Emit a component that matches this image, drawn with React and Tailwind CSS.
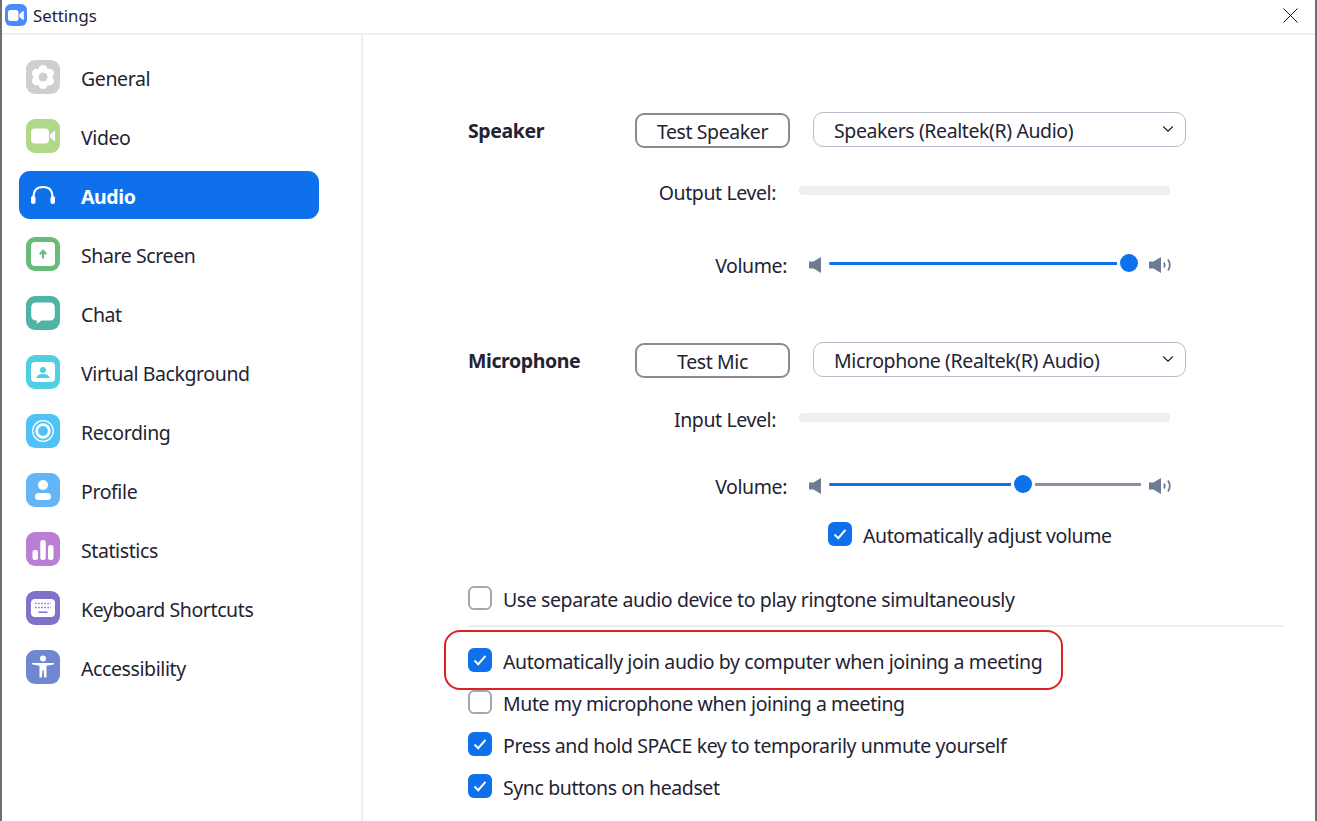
import { ChevronDown } from "lucide-react";

// sidebar tile icons, all drawn on a 34x34 box
const icons = {
  General: (
    <>
      <g fill="#fff">
        <circle cx="17" cy="17" r="8.500" />
        <circle cx="17" cy="9.500" r="4.500" />
        <circle cx="17" cy="24.500" r="4.500" />
        <circle cx="10.500" cy="13.250" r="4.500" />
        <circle cx="23.500" cy="13.250" r="4.500" />
        <circle cx="10.500" cy="20.750" r="4.500" />
        <circle cx="23.500" cy="20.750" r="4.500" />
      </g>
      <circle cx="17" cy="17" r="4.500" fill="#cfcfcf" />
    </>
  ),
  Video: (
    <>
      <rect x="5" y="9.500" width="18" height="15" rx="4" fill="#fff" />
      <path fill="#fff" d="M24 15.500l4-3.300c.6-.5 1.200-.2 1.200.6v8.400c0 .8-.6 1.100-1.200.6l-4-3.300z" />
    </>
  ),
  "Share Screen": (
    <>
      <rect x="5" y="5" width="24" height="24" rx="4" fill="#fff" />
      <path d="M17 21.500v-7M13.800 17.200l3.200-3.400 3.200 3.400" fill="none" stroke="#68bb78" strokeWidth="2" />
    </>
  ),
  Chat: (
    <path
      fill="#fff"
      d="M10 6.500h14c2.800 0 4.800 2 4.800 4.800v8.400c0 2.800-2 4.800-4.800 4.800H15.500l-5 3.500.6-3.500H10c-2.800 0-4.800-2-4.800-4.800v-8.400c0-2.800 2-4.800 4.800-4.800z"
    />
  ),
  "Virtual Background": (
    <>
      <rect x="5" y="7" width="24" height="20" rx="4" fill="#fff" />
      <circle cx="17" cy="15" r="3" fill="#4fcfe0" />
      <path d="M10.500 23c.4-2.800 3-4 6.500-4s6.100 1.200 6.500 4z" fill="#4fcfe0" />
    </>
  ),
  Recording: (
    <>
      <circle cx="17" cy="17" r="10.300" fill="none" stroke="#fff" strokeWidth="1.200" />
      <circle cx="17" cy="17" r="6.300" fill="none" stroke="#fff" strokeWidth="2.800" />
    </>
  ),
  Profile: (
    <>
      <circle cx="17" cy="12" r="5" fill="#fff" />
      <rect x="9" y="20" width="16" height="7" rx="3.500" fill="#fff" />
    </>
  ),
  Statistics: (
    <>
      <rect x="6.500" y="18" width="5.500" height="10" rx="2" fill="#fff" />
      <rect x="14.250" y="8" width="5.500" height="20" rx="2.500" fill="#fff" />
      <rect x="22" y="13" width="5.500" height="15" rx="2.500" fill="#fff" />
    </>
  ),
  "Keyboard Shortcuts": (
    <>
      <rect x="5" y="8" width="24" height="18" rx="4" fill="#fff" />
      <path
        d="M9 12.500h16M9 16.500h16"
        stroke="#7e72c9"
        strokeWidth="1.500"
        strokeDasharray="1.500 1.600"
        fill="none"
      />
      <rect x="12.500" y="20.500" width="9" height="1.500" fill="#7e72c9" />
    </>
  ),
  Accessibility: (
    <>
      <circle cx="17" cy="8.500" r="3" fill="#fff" />
      <path
        fill="#fff"
        d="M6.500 13h21c.7 0 .7 1.500 0 1.500L20.500 15.800V27.500h-2.300L17.500 20h-1l-.7 7.500h-2.300V15.800L6.500 14.500c-.7 0-.7-1.500 0-1.500z"
      />
    </>
  ),
};

const nav = [
  { name: "General", bg: "bg-[#cfcfcf]" },
  { name: "Video", bg: "bg-[#b0d889]" },
  { name: "Audio", active: true },
  { name: "Share Screen", bg: "bg-[#68bb78]" },
  { name: "Chat", bg: "bg-[#4fb3a5]" },
  { name: "Virtual Background", bg: "bg-[#4fcfe0]" },
  { name: "Recording", bg: "bg-[#4fc3f7]" },
  { name: "Profile", bg: "bg-[#64b5f6]" },
  { name: "Statistics", bg: "bg-[#ba7fd4]" },
  { name: "Keyboard Shortcuts", bg: "bg-[#7e72c9]" },
  { name: "Accessibility", bg: "bg-[#7086cf]" },
];

function NavItem({ name, bg, active }) {
  if (active) {
    return (
      <div className="my-[5.500px] flex h-[48px] w-[300px] items-center rounded-[11px] bg-[#0e71eb]">
        <svg width="24" height="18" viewBox="0 0 24 18" className="ml-[12px]">
          <path d="M2.500 11C2.500 4.500 6 1 12 1s9.500 3.500 9.500 10" fill="none" stroke="#fff" strokeWidth="2" />
          <rect x="0" y="10" width="4.500" height="8" rx="2" fill="#fff" />
          <rect x="19.500" y="10" width="4.500" height="8" rx="2" fill="#fff" />
        </svg>
        <span className="ml-[26px] pt-[4px] font-bold text-white">{name}</span>
      </div>
    );
  }
  return (
    <div className="flex h-[59px] items-center pl-[7px]">
      <div className={`flex h-[34px] w-[34px] items-center justify-center rounded-[9px] ${bg}`}>
        <svg width="34" height="34" viewBox="0 0 34 34">
          {icons[name]}
        </svg>
      </div>
      <span className="ml-[21px] pt-[4px]">{name}</span>
    </div>
  );
}

function Speaker({ loud }) {
  return (
    <svg width={loud ? 23 : 13} height="16" viewBox={loud ? "0 0 23 16" : "0 0 13 16"}>
      <path d="M0 4.500h4.500L12 0v16L4.500 11.500H0z" fill="#6e7a8f" />
      {loud && (
        <>
          <path d="M15 5.500c1 1.600 1 3.400 0 5" fill="none" stroke="#6e7a8f" strokeWidth="1.800" />
          <path d="M19 2.500c2.200 3.400 2.200 7.600 0 11" fill="none" stroke="#6e7a8f" strokeWidth="1.800" />
        </>
      )}
    </svg>
  );
}

function Check({ on }) {
  if (!on) {
    return <div className="h-[24px] w-[24px] shrink-0 rounded-[6px] border-2 border-[#a6a6ad] bg-white" />;
  }
  return (
    <div className="flex h-[24px] w-[24px] shrink-0 items-center justify-center rounded-[6px] bg-[#0e71eb]">
      <svg width="14" height="12" viewBox="0 0 14 12">
        <path d="M1.500 6.500l3.700 3.700L12.500 1.800" fill="none" stroke="#fff" strokeWidth="2" />
      </svg>
    </div>
  );
}

function CheckRow({ on, label, className = "" }) {
  return (
    <div className={`flex h-[26px] items-center gap-[11px] ${className}`}>
      <Check on={on} />
      <span className="translate-y-[2px]">{label}</span>
    </div>
  );
}

function DeviceRow({ title, button, device }) {
  return (
    <div className="flex h-[36px] items-start">
      <div className="flex h-[36px] w-[167px] items-center pt-[2px] font-bold">{title}</div>
      <div className="mt-[1px] flex h-[35px] w-[155px] items-center justify-center rounded-[9px] border-2 border-[#8a8a8f] pt-[3px]">
        {button}
      </div>
      <div className="ml-[23px] flex h-[35px] w-[373px] items-center justify-between rounded-[10px] border border-[#babacc] pl-[20px] pr-[8px]">
        <span className="pt-[2px]">{device}</span>
        <ChevronDown size={18} strokeWidth={1.500} className="-translate-y-[1px]" />
      </div>
    </div>
  );
}

function LevelRow({ label, className = "" }) {
  return (
    <div className={`flex h-[26px] ${className}`}>
      <div className="w-[308px] text-right">{label}</div>
      <div className="ml-[23px] mt-[6px] h-[9px] w-[371px] rounded-[3px] bg-[#eeeeee]" />
    </div>
  );
}

function VolumeRow({ value, className = "" }) {
  return (
    <div className={`flex h-[28px] items-center ${className}`}>
      <div className="w-[319px] pt-[4px] text-right">Volume:</div>
      <div className="ml-[22px] flex translate-y-[1px] items-center">
        <Speaker />
      </div>
      <div className="ml-[7px] flex w-[312px] -translate-y-[1px] items-center">
        <div className="h-[3px] rounded-l bg-[#0e71eb]" style={{ width: value }} />
        <div className="mx-[3px] h-[18px] w-[18px] shrink-0 rounded-full bg-[#0e71eb]" />
        <div className="h-[3px] flex-1 bg-[#8e8ea3]" />
      </div>
      <div className="ml-[8px] flex translate-y-[1px] items-center">
        <Speaker loud />
      </div>
    </div>
  );
}

export default function App() {
  return (
    <div
      className="flex h-[821px] w-[1317px] flex-col overflow-hidden border-l-2 border-r-2 border-l-[#6f6f6f] border-r-[#6f6f6f] bg-white text-[19.500px] leading-[26px] tracking-[-0.4px] text-[#232333]"
      style={{ fontFamily: '"Noto Sans", sans-serif' }}
    >
      <header className="flex h-[35px] shrink-0 items-center border-b-2 border-[#eeeff2] pb-[3px] pl-[3px] pr-[17px]">
        <div className="flex h-[22px] w-[22px] items-center justify-center rounded-[6px] bg-[#4a8cff]">
          <svg width="16" height="11" viewBox="0 0 16 11">
            <rect x="0" y="0" width="10.500" height="11" rx="2.500" fill="#fff" />
            <path d="M11.500 4l3.300-2.700c.5-.4 1-.2 1 .5v7.400c0 .7-.5.900-1 .5L11.500 7z" fill="#fff" />
          </svg>
        </div>
        <span className="ml-[6px] pt-[2px] text-[16.800px] tracking-normal">Settings</span>
        <svg width="15" height="15" viewBox="0 0 15 15" className="ml-auto">
          <path d="M.5.5l14 14M14.500.5l-14 14" stroke="#111" strokeWidth="1" fill="none" />
        </svg>
      </header>

      <div className="flex min-h-0 flex-1">
        <aside className="w-[361px] shrink-0 border-r-2 border-[#eeeff2] pl-[17px] pt-[12.500px]">
          {nav.map((item) => (
            <NavItem key={item.name} {...item} />
          ))}
        </aside>

        <main className="relative flex-1 pl-[105px] pt-[77px]">
          <DeviceRow title="Speaker" button="Test Speaker" device="Speakers (Realtek(R) Audio)" />
          <LevelRow label="Output Level:" className="mt-[32px]" />
          <VolumeRow value={288} className="mt-[44px]" />

          <div className="mt-[64px]">
            <DeviceRow title="Microphone" button="Test Mic" device="Microphone (Realtek(R) Audio)" />
          </div>
          <LevelRow label="Input Level:" className="mt-[29px]" />
          <VolumeRow value={182} className="mt-[38px]" />
          <CheckRow on label="Automatically adjust volume" className="ml-[360px] mt-[22px]" />

          <CheckRow on={false} label="Use separate audio device to play ringtone simultaneously" className="mt-[38px]" />
          <div className="mt-[14px] h-[2px] w-[816px] bg-[#eeeff2]" />

          <div className="relative mt-[20px]">
            <CheckRow on label="Automatically join audio by computer when joining a meeting" />
            <div className="absolute -left-[24px] -top-[17px] h-[60px] w-[619px] rounded-[16px] border-2 border-[#df1f26]" />
          </div>
          <CheckRow on={false} label="Mute my microphone when joining a meeting" className="mt-[16px]" />
          <CheckRow on label="Press and hold SPACE key to temporarily unmute yourself" className="mt-[16px]" />
          <CheckRow on label="Sync buttons on headset" className="mt-[16px]" />
        </main>
      </div>
    </div>
  );
}
